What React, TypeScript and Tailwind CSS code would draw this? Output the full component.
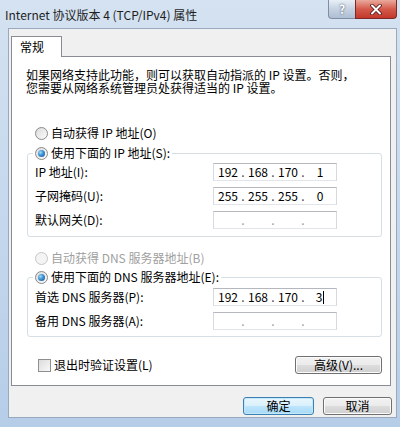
import React from 'react';

const Radio = ({ checked, disabled }: { checked?: boolean; disabled?: boolean }) => (
  <span
    className={`flex h-[13px] w-[13px] shrink-0 items-center justify-center rounded-full border ${
      disabled ? 'border-[#c6c6c6] bg-[#f4f4f4]' : 'border-[#8a8a8a] bg-linear-to-br from-[#dcdcdc] to-[#fbfbfb]'
    }`}
  >
    {checked && (
      <span className="h-[7px] w-[7px] rounded-full bg-[radial-gradient(circle_at_35%_35%,#9fdcfa_0%,#3a8fd0_45%,#15508f_100%)]" />
    )}
  </span>
);

const IpBox = ({ parts, caret }: { parts?: string[]; caret?: boolean }) => (
  <div className="flex h-[18px] w-[124px] items-center border border-[#b4b7bd] border-x-[#d6d9df] border-b-[#e1e5ea] bg-white px-px text-[12px] leading-none">
    {[0, 1, 2, 3].map(i => (
      <div key={i} className="flex flex-1 items-center">
        <span className="flex flex-1 items-center justify-center">
          {parts?.[i] ?? ''}
          {caret && i === 3 && <span className="ml-px h-[13px] w-px bg-black" />}
        </span>
        {i < 3 && <span className={`w-[4px] text-center ${parts ? 'text-[#444]' : 'text-[#9a9a9a]'}`}>.</span>}
      </div>
    ))}
  </div>
);

const FieldRow = ({ label, parts, caret }: { label: string; parts?: string[]; caret?: boolean }) => (
  <div className="flex h-[18px] items-center">
    <span className="w-[178px]">{label}</span>
    <IpBox parts={parts} caret={caret} />
  </div>
);

const WinButton = ({ children, primary, width }: { children: React.ReactNode; primary?: boolean; width: string }) => (
  <button
    className={`flex h-[18px] ${width} items-center justify-center rounded-[3px] border text-[12px] leading-none ${
      primary
        ? 'border-[#3c7fb1] bg-[linear-gradient(#eaf6fd_0%,#d9f0fc_50%,#bee6fd_50%,#a7d9f5_100%)] shadow-[inset_0_0_0_1px_#c2e8fb]'
        : 'border-[#707070] bg-[linear-gradient(#f2f2f2_0%,#ebebeb_50%,#dddddd_50%,#cfcfcf_100%)] shadow-[inset_0_0_0_1px_#fbfbfb]'
    }`}
  >
    {children}
  </button>
);

const GroupBox = ({ legend, children, className }: { legend: string; children: React.ReactNode; className: string }) => (
  <fieldset className={`rounded-[3px] border border-[#d5dfe5] pl-[7px] ${className}`}>
    <legend className="-ml-[2px] px-[2px]">
      <span className="flex h-[16px] items-center gap-[3px]">
        <Radio checked />
        <span>{legend}</span>
      </span>
    </legend>
    {children}
  </fieldset>
);

export default function App() {
  return (
    <div className="flex h-[427px] w-[400px] flex-col overflow-hidden bg-linear-to-b from-[#d4e2f1] to-[#b6cde8] font-['Noto_Sans_CJK_SC','Noto_Sans',sans-serif] text-[12px] text-black">
      {/* title bar */}
      <div className="flex h-[28px] shrink-0 items-start">
        <span className="pl-[5px] pt-[7px] text-[12px] leading-[16px] text-[#1e1e1e]">Internet 协议版本 4 (TCP/IPv4) 属性</span>
        <div className="ml-auto mr-[3px] flex h-[19px]">
          <div className="flex w-[27px] items-center justify-center rounded-bl-[4px] border border-r-0 border-t-0 border-[#7f8ea3] bg-linear-to-b from-[#e9eff7] via-[#c6d2e1] to-[#aebed3] text-[12px] font-bold leading-none text-white [text-shadow:0_0_2px_#2b3a52]">
            ?
          </div>
          <div className="flex w-[42px] items-center justify-center rounded-br-[4px] border border-t-0 border-[#7a2b26] bg-linear-to-b from-[#e9a99d] via-[#d45a4c] to-[#c3372a]">
            <svg width="12" height="11" viewBox="0 0 12 11">
              <path d="M2 1.5 L10 9.5 M10 1.5 L2 9.5" stroke="#4b1511" strokeWidth="3.6" strokeLinecap="round" />
              <path d="M2 1.5 L10 9.5 M10 1.5 L2 9.5" stroke="#ffffff" strokeWidth="2" strokeLinecap="round" />
            </svg>
          </div>
        </div>
      </div>

      <div className="flex flex-1">
        <div className="w-[8px] shrink-0" />
        {/* client area */}
        <div className="mr-[3px] flex flex-1 flex-col border border-[#98a9be] bg-[#f0f0f0] pt-[7px]">
          <div className="relative z-10 -mb-px ml-[2px] flex h-[21px] w-[51px] items-center border border-b-0 border-[#898c95] bg-white pl-[8px]">
            常规
          </div>

          <div className="ml-[2px] mr-[5px] flex h-[330px] flex-col border border-[#898c95] bg-white">
            <div className="ml-[14px] mt-[11px] leading-[13px]">
              <div>如果网络支持此功能，则可以获取自动指派的 IP 设置。否则，</div>
              <div>您需要从网络系统管理员处获得适当的 IP 设置。</div>
            </div>

            <div className="ml-[15px] mt-[31px] w-[355px]">
              <div className="flex h-[16px] items-center gap-[3px] pl-[8px]">
                <Radio />
                <span>自动获得 IP 地址(O)</span>
              </div>

              <GroupBox legend="使用下面的 IP 地址(S):" className="mt-[4px] pb-[7px]">
                <div className="mt-[2px] flex flex-col gap-[6px]">
                  <FieldRow label="IP 地址(I):" parts={['192', '168', '170', '1']} />
                  <FieldRow label="子网掩码(U):" parts={['255', '255', '255', '0']} />
                  <FieldRow label="默认网关(D):" />
                </div>
              </GroupBox>

              <div className="mt-[13px] flex h-[16px] items-center gap-[3px] pl-[8px] text-[#a0a0a0]">
                <Radio disabled />
                <span>自动获得 DNS 服务器地址(B)</span>
              </div>

              <GroupBox legend="使用下面的 DNS 服务器地址(E):" className="mt-[3px] pb-[6px]">
                <div className="mt-[3px] flex flex-col gap-[6px]">
                  <FieldRow label="首选 DNS 服务器(P):" parts={['192', '168', '170', '3']} caret />
                  <FieldRow label="备用 DNS 服务器(A):" />
                </div>
              </GroupBox>

              <div className="mt-[19px] flex items-center justify-between">
                <div className="flex items-center gap-[3px] pl-[11px]">
                  <span className="h-[13px] w-[13px] border border-[#8f8f8f] bg-linear-to-br from-[#dcdcdc] to-[#f8f8f8]" />
                  <span>退出时验证设置(L)</span>
                </div>
                <WinButton width="w-[87px]">高级(V)...</WinButton>
              </div>
            </div>
          </div>

          <div className="mr-[4px] mt-[11px] flex justify-end gap-[9px]">
            <WinButton primary width="w-[71px]">确定</WinButton>
            <WinButton width="w-[69px]">取消</WinButton>
          </div>
        </div>
      </div>
      <div className="h-[9px] shrink-0" />
    </div>
  );
}
